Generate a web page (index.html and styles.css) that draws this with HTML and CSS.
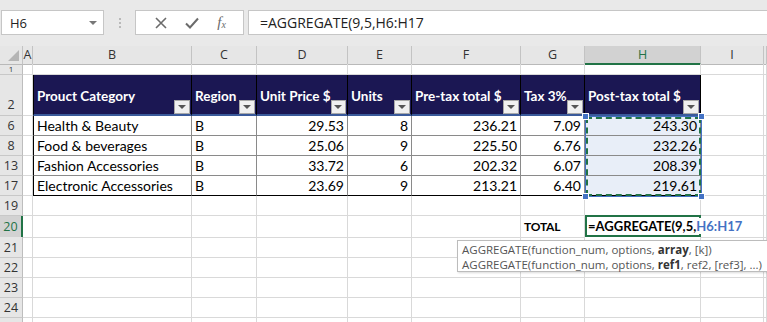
FILE: index.html
```html
<!DOCTYPE html>
<html lang="en">
<head>
    <meta charset="UTF-8">
    <title>AGGREGATE</title>
    <link rel="stylesheet" href="styles.css">
</head>
<body>
    <div class="ribbon">
        <div class="namebox">
            <span>H6</span>
            <span class="caret"></span>
        </div>
        <div class="grip"><i></i><i></i><i></i></div>
        <div class="fxbox">
            <svg width="12" height="12" viewBox="0 0 12 12"><path d="M1 1 L11 11 M11 1 L1 11" stroke="#6b6b6b" stroke-width="1.6"/></svg>
            <svg width="14" height="12" viewBox="0 0 14 12"><path d="M1 6.5 L5 10.5 L13 1.5" stroke="#6b6b6b" stroke-width="2" fill="none"/></svg>
            <span class="fx">f<sub>x</sub></span>
        </div>
        <div class="formula">=AGGREGATE(9,5,H6:H17</div>
    </div>

    <div class="sheet">
        <div class="row colhead">
            <div class="corner"><span></span></div>
            <div>A</div><div>B</div><div>C</div><div>D</div><div>E</div>
            <div>F</div><div>G</div><div class="on">H</div><div>I</div><div></div>
        </div>

        <div class="row r1">
            <div class="rh">1</div>
            <div class="c"></div><div class="c"></div><div class="c"></div><div class="c"></div><div class="c"></div>
            <div class="c"></div><div class="c"></div><div class="c"></div><div class="c"></div><div class="c"></div>
        </div>

        <div class="row r2">
            <div class="rh">2</div>
            <div class="c"></div>
            <div class="th first"><span>Prouct Category</span><b class="flt"></b></div>
            <div class="th"><span>Region</span><b class="flt"></b></div>
            <div class="th"><span>Unit Price $</span><b class="flt"></b></div>
            <div class="th"><span>Units</span><b class="flt"></b></div>
            <div class="th"><span>Pre-tax total $</span><b class="flt"></b></div>
            <div class="th"><span>Tax 3%</span><b class="flt"></b></div>
            <div class="th"><span>Post-tax total $</span><b class="flt"></b></div>
            <div class="c"></div><div class="c"></div>
        </div>

        <div class="row">
            <div class="rh">6</div>
            <div class="c"></div>
            <div class="td first">Health &amp; Beauty</div>
            <div class="td">B</div>
            <div class="td num">29.53</div>
            <div class="td num">8</div>
            <div class="td num">236.21</div>
            <div class="td num">7.09</div>
            <div class="td num sel">243.30</div>
            <div class="c"></div><div class="c"></div>
        </div>
        <div class="row">
            <div class="rh">8</div>
            <div class="c"></div>
            <div class="td first">Food &amp; beverages</div>
            <div class="td">B</div>
            <div class="td num">25.06</div>
            <div class="td num">9</div>
            <div class="td num">225.50</div>
            <div class="td num">6.76</div>
            <div class="td num sel">232.26</div>
            <div class="c"></div><div class="c"></div>
        </div>
        <div class="row">
            <div class="rh">13</div>
            <div class="c"></div>
            <div class="td first">Fashion Accessories</div>
            <div class="td">B</div>
            <div class="td num">33.72</div>
            <div class="td num">6</div>
            <div class="td num">202.32</div>
            <div class="td num">6.07</div>
            <div class="td num sel">208.39</div>
            <div class="c"></div><div class="c"></div>
        </div>
        <div class="row last">
            <div class="rh">17</div>
            <div class="c"></div>
            <div class="td first">Electronic Accessories</div>
            <div class="td">B</div>
            <div class="td num">23.69</div>
            <div class="td num">9</div>
            <div class="td num">213.21</div>
            <div class="td num">6.40</div>
            <div class="td num sel">219.61</div>
            <div class="c"></div><div class="c"></div>
        </div>

        <div class="row">
            <div class="rh">19</div>
            <div class="c"></div><div class="c"></div><div class="c"></div><div class="c"></div><div class="c"></div>
            <div class="c"></div><div class="c"></div><div class="c"></div><div class="c"></div><div class="c"></div>
        </div>
        <div class="row tall">
            <div class="rh on">20</div>
            <div class="c"></div><div class="c"></div><div class="c"></div><div class="c"></div><div class="c"></div>
            <div class="c"></div>
            <div class="c total">TOTAL</div>
            <div class="c edit"><span>=AGGREGATE(9,5,<em>H6:H17</em></span><i class="cursor"></i></div>
            <div class="c"></div><div class="c"></div>
        </div>
        <div class="row tall">
            <div class="rh">21</div>
            <div class="c"></div><div class="c"></div><div class="c"></div><div class="c"></div><div class="c"></div>
            <div class="c"></div><div class="c"></div><div class="c"></div><div class="c"></div><div class="c"></div>
        </div>
        <div class="row">
            <div class="rh">22</div>
            <div class="c"></div><div class="c"></div><div class="c"></div><div class="c"></div><div class="c"></div>
            <div class="c"></div><div class="c"></div><div class="c"></div><div class="c"></div><div class="c"></div>
        </div>
        <div class="row">
            <div class="rh">23</div>
            <div class="c"></div><div class="c"></div><div class="c"></div><div class="c"></div><div class="c"></div>
            <div class="c"></div><div class="c"></div><div class="c"></div><div class="c"></div><div class="c"></div>
        </div>
        <div class="row">
            <div class="rh">24</div>
            <div class="c"></div><div class="c"></div><div class="c"></div><div class="c"></div><div class="c"></div>
            <div class="c"></div><div class="c"></div><div class="c"></div><div class="c"></div><div class="c"></div>
        </div>
        <div class="row">
            <div class="rh"></div>
            <div class="c"></div><div class="c"></div><div class="c"></div><div class="c"></div><div class="c"></div>
            <div class="c"></div><div class="c"></div><div class="c"></div><div class="c"></div><div class="c"></div>
        </div>

        <!-- range being referenced by the formula -->
        <div class="range">
            <div class="ants"></div>
            <b class="h tl"></b><b class="h tr"></b><b class="h bl"></b><b class="h br"></b>
        </div>

        <div class="tip">
            <div>AGGREGATE(function_num, options, <b>array</b>, [k])</div>
            <div>AGGREGATE(function_num, options, <b>ref1</b>, ref2, [ref3], ...)</div>
        </div>
    </div>
</body>
</html>
```

FILE: styles.css
```css
body {
    margin: 0;
    width: 767px;
    height: 322px;
    overflow: hidden;
    background: #fff;
    font-family: "Open Sans", "Noto Sans", sans-serif;
}

/* formula bar */
.ribbon {
    height: 46px;
    box-sizing: border-box;
    padding: 10px 0 11px 1px;
    background: #e9e9e9;
    display: flex;
    align-items: stretch;
}
.namebox {
    width: 103px;
    box-sizing: border-box;
    background: #fff;
    border: 1px solid #c6c6c6;
    display: flex;
    align-items: center;
    justify-content: space-between;
    padding: 0 6px 0 8px;
    font-size: 13px;
    color: #222;
}
.caret {
    width: 0;
    height: 0;
    border-left: 4px solid transparent;
    border-right: 4px solid transparent;
    border-top: 4px solid #777;
}
.grip {
    width: 31px;
    display: flex;
    flex-direction: column;
    align-items: center;
    justify-content: center;
    gap: 2px;
}
.grip i {
    width: 2px;
    height: 2px;
    background: #b9b9b9;
}
.fxbox {
    width: 109px;
    box-sizing: border-box;
    background: #fff;
    border: 1px solid #c6c6c6;
    display: flex;
    align-items: center;
    justify-content: space-around;
    padding: 0 8px 0 10px;
}
.fx {
    font-family: "Liberation Serif", serif;
    font-style: italic;
    font-size: 15px;
    color: #6b6b6b;
}
.fx sub {
    font-size: 10px;
    vertical-align: -1px;
}
.formula {
    flex: 1;
    margin-left: 4px;
    background: #fff;
    border: 1px solid #c6c6c6;
    border-right: none;
    padding-left: 11px;
    display: flex;
    align-items: center;
    font-size: 14px;
    color: #222;
}

/* grid */
.sheet {
    position: relative;
}
.row {
    display: grid;
    grid-template-columns: 23px 10px 159px 65px 91px 64px 109px 64px 116px 63px 3px;
    height: 20px;
}
.row > div {
    box-sizing: border-box;
}
.row.r1 { height: 11px; }
.row.r2 { height: 41px; }
.row.tall { height: 21px; }

.colhead {
    height: 18px;
    background: #e6e6e6;
}
.colhead > div {
    border-right: 1px solid #c3c3c3;
    border-bottom: 1px solid #b9b9b9;
    text-align: center;
    font-size: 12.5px;
    line-height: 17px;
    color: #333;
}
.colhead .on {
    background: #d2d2d2;
    border-bottom: 2px solid #217346;
    color: #217346;
}
.corner {
    position: relative;
}
.corner span {
    position: absolute;
    right: 3px;
    bottom: 3px;
    width: 0;
    height: 0;
    border-left: 11px solid transparent;
    border-bottom: 11px solid #b5b5b5;
}

.rh {
    background: #e6e6e6;
    border-right: 1px solid #bdbdbd;
    border-bottom: 1px solid #c8c8c8;
    text-align: center;
    font-size: 12.5px;
    color: #333;
    display: flex;
    align-items: center;
    justify-content: center;
}
.r1 .rh { font-size: 8px; line-height: 10px; }
.r2 .rh { align-items: flex-end; padding-bottom: 2px; }
.rh.on {
    background: #d2d2d2;
    border-right: 2px solid #217346;
    color: #217346;
}

.c {
    border-right: 1px solid #d9d9d9;
    border-bottom: 1px solid #d9d9d9;
}

/* table */
.th, .td {
    font-family: Lato, "Liberation Sans", sans-serif;
    white-space: nowrap;
    overflow: hidden;
}
.th {
    font-size: 13.5px;
    background: #1b1753;
    color: #fff;
    font-weight: bold;
    border-right: 1px solid #000;
    border-bottom: 2px solid #3a5a9a;
    display: flex;
    align-items: center;
    padding-left: 3px;
}
.th span {
    flex: 1;
    padding-top: 2px;
}
.th.first { border-left: 1px solid #000; }
.flt {
    align-self: flex-end;
    width: 16px;
    height: 14px;
    box-sizing: border-box;
    margin: 0 1px 0 0;
    background: #f0f0f0;
    border: 1px solid #a8a8a8;
    display: flex;
    align-items: center;
    justify-content: center;
}
.flt::after {
    content: "";
    border-left: 4px solid transparent;
    border-right: 4px solid transparent;
    border-top: 4px solid #555;
}
.td {
    font-size: 14px;
    color: #000;
    border-right: 1px solid #8a8a8a;
    border-bottom: 1px solid #8a8a8a;
    padding: 0 3px;
    line-height: 20px;
}
.td.first { border-left: 1px solid #000; }
.td.num { text-align: right; }
.td.sel { background: #e8eef8; }
.row.last .td { border-bottom-color: #000; }

.total {
    font-family: Lato, "Liberation Sans", sans-serif;
    font-size: 12px;
    font-weight: bold;
    letter-spacing: -0.2px;
    padding-left: 3px;
    line-height: 21px;
}
.edit {
    border: 2px solid #217346;
    margin-top: -1px;
    height: 22px;
    font-family: Lato, "Liberation Sans", sans-serif;
    font-size: 13px;
    font-weight: bold;
    white-space: nowrap;
    display: flex;
    align-items: center;
    padding-left: 1px;
    position: relative;
    z-index: 2;
}
.edit span {
    background: #fff;
}
.edit em {
    font-style: normal;
    color: #4472c4;
}
.cursor {
    display: inline-block;
    width: 1px;
    height: 15px;
    background: #000;
    margin-left: 1px;
}

/* referenced range */
.range {
    position: absolute;
    left: 585px;
    top: 70px;
    width: 117px;
    height: 81px;
    box-sizing: border-box;
    border: 1px solid #4472c4;
}
.ants {
    height: 100%;
    box-sizing: border-box;
    border: 2px dashed #217346;
}
.h {
    position: absolute;
    width: 5px;
    height: 5px;
    background: #4472c4;
    border: 1px solid #fff;
}
.tl { left: -4px; top: -4px; }
.tr { right: -4px; top: -4px; }
.bl { left: -4px; bottom: -4px; }
.br { right: -4px; bottom: -4px; }

.tip {
    position: absolute;
    left: 457px;
    top: 194px;
    width: 320px;
    height: 32px;
    box-sizing: border-box;
    background: #fff;
    border: 1px solid #bcbcbc;
    box-shadow: 1px 1px 2px rgba(0,0,0,0.15);
    padding: 1px 0 0 4px;
    font-size: 11.5px;
    line-height: 15px;
    color: #555;
    white-space: nowrap;
    z-index: 3;
}
.tip b { color: #333; }
```
